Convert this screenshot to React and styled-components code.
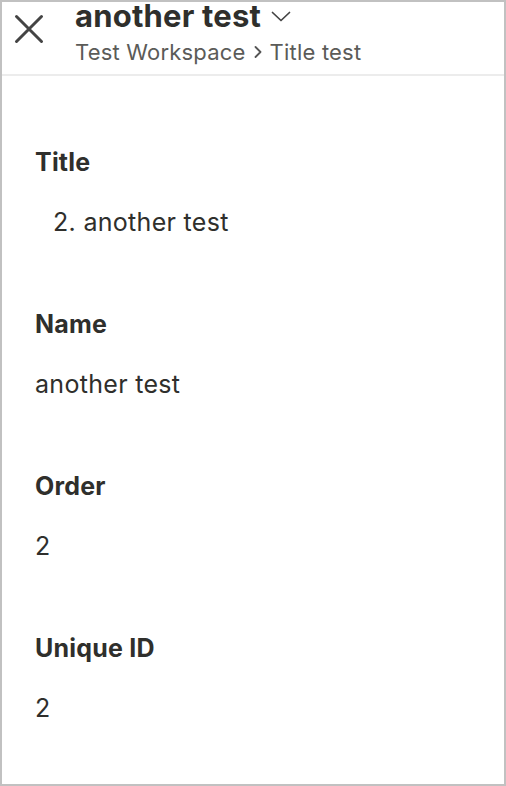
import React from 'react';
import styled, { createGlobalStyle } from 'styled-components';

const GlobalStyle = createGlobalStyle`
  html, body {
    margin: 0;
    padding: 0;
    background: #ffffff;
  }
  body {
    font-family: Inter, "Noto Sans", sans-serif;
    color: #2f2f2c;
  }
`;

const Frame = styled.div`
  box-sizing: border-box;
  width: 506px;
  height: 786px;
  border: 2px solid #c1c1c1;
  background: #fff;
  display: flex;
  flex-direction: column;
`;

const Header = styled.header`
  display: flex;
  align-items: flex-start;
  gap: 31px;
  padding: 0 12px;
  height: 72px;
  border-bottom: 2px solid #ececec;
`;

const CloseButton = styled.button`
  border: 0;
  background: none;
  padding: 0;
  margin-top: 12px;
  width: 30px;
  height: 30px;
  display: flex;
  align-items: center;
  justify-content: center;
  color: #444;
`;

const Heading = styled.div`
  display: flex;
  flex-direction: column;
`;

const TitleRow = styled.div`
  display: flex;
  align-items: center;
  gap: 10px;
  font-size: 31px;
  font-weight: 700;
  letter-spacing: 0.2px;
  line-height: 30px;
  margin-top: -1px;
  color: #2f2f2c;
`;

const Crumbs = styled.div`
  display: flex;
  align-items: center;
  gap: 8px;
  font-size: 22px;
  letter-spacing: 0.2px;
  line-height: 40px;
  margin-top: 1px;
  color: #5b5b58;
`;

const Body = styled.main`
  display: flex;
  flex-direction: column;
  gap: 70px;
  padding: 70px 33px 0;
`;

const Field = styled.section`
  display: flex;
  flex-direction: column;
  gap: 28px;
`;

const Label = styled.div`
  font-size: 25px;
  font-weight: 700;
  letter-spacing: 0.2px;
  line-height: 32px;
  color: #2f2f2c;
`;

const Value = styled.div`
  font-size: 25px;
  letter-spacing: 0.3px;
  line-height: 32px;
  color: #2f2f2c;
  padding-left: ${({ $indent }) => ($indent ? '18px' : '0')};
`;

const fields = [
  { label: 'Title', value: '2. another test', indent: true },
  { label: 'Name', value: 'another test' },
  { label: 'Order', value: '2' },
  { label: 'Unique ID', value: '2' },
];

const App = () => {
  return (
    <>
      <GlobalStyle />
      <Frame>
        <Header>
          <CloseButton aria-label="Close">
            <svg width="30" height="30" viewBox="0 0 30 30" fill="none" stroke="currentColor" strokeWidth="3" strokeLinecap="round">
              <path d="M2.5 2.5L27.5 27.5M27.5 2.5L2.5 27.5" />
            </svg>
          </CloseButton>
          <Heading>
            <TitleRow>
              another test
              <svg width="20" height="11" viewBox="0 0 20 11" fill="none" stroke="#444" strokeWidth="1.7" strokeLinecap="round" strokeLinejoin="round">
                <path d="M1.5 1.5L10 9.5L18.5 1.5" />
              </svg>
            </TitleRow>
            <Crumbs>
              Test Workspace
              <svg width="8" height="12" viewBox="0 0 8 12" fill="none" stroke="#555" strokeWidth="1.8" strokeLinecap="round" strokeLinejoin="round">
                <path d="M1.5 1L6.5 6L1.5 11" />
              </svg>
              Title test
            </Crumbs>
          </Heading>
        </Header>
        <Body>
          {fields.map((f) => (
            <Field key={f.label}>
              <Label>{f.label}</Label>
              <Value $indent={f.indent}>{f.value}</Value>
            </Field>
          ))}
        </Body>
      </Frame>
    </>
  );
};

export default App;
